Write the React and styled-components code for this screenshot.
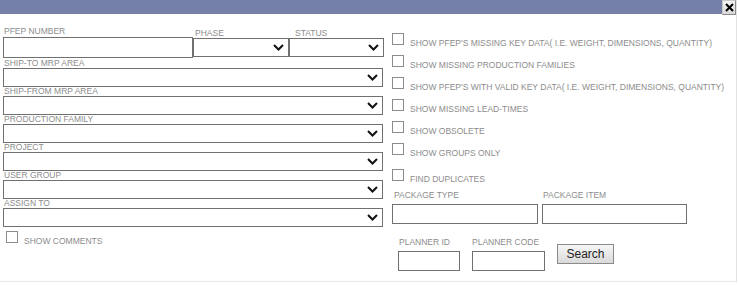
import styled, { createGlobalStyle } from "styled-components";

const GlobalStyle = createGlobalStyle`
    body {
        margin: 0;
        background: #ffffff;
        font-family: "Liberation Sans", Arial, Helvetica, sans-serif;
    }
`;

const leftFields = ['SHIP-TO MRP AREA', 'SHIP-FROM MRP AREA', 'PRODUCTION FAMILY', 'PROJECT', 'USER GROUP', 'ASSIGN TO'];

const options = [
    "SHOW PFEP'S MISSING KEY DATA( I.E. WEIGHT, DIMENSIONS, QUANTITY)",
    'SHOW MISSING PRODUCTION FAMILIES',
    "SHOW PFEP'S WITH VALID KEY DATA( I.E. WEIGHT, DIMENSIONS, QUANTITY)",
    'SHOW MISSING LEAD-TIMES',
    'SHOW OBSOLETE',
    'SHOW GROUPS ONLY',
    'FIND DUPLICATES',
];

function Chevron() {
    return (
        <svg width="11" height="7" viewBox="0 0 11 7">
            <path d="M1 1 L5.5 5.5 L10 1" fill="none" stroke="#111" strokeWidth="2" />
        </svg>
    );
}

function SelectBox({ width, spaced }) {
    return (
        <Select width={width} spaced={spaced}>
            <Chevron />
        </Select>
    );
}

export default function App() {
    return (
        <>
            <GlobalStyle />
            <Dialog>
                <TitleBar>
                    <CloseButton>
                        <svg width="9" height="9" viewBox="0 0 9 9">
                            <path d="M1 1 L8 8 M8 1 L1 8" stroke="#000" strokeWidth="2" />
                        </svg>
                    </CloseButton>
                </TitleBar>

                <Body>
                    <LeftColumn>
                        <TopRow>
                            <Field>
                                <Label>PFEP NUMBER</Label>
                                <TextBox width={190} height={21} />
                            </Field>
                            <Field>
                                <Label indent={2} drop={1}>PHASE</Label>
                                <SelectBox width={96} spaced />
                            </Field>
                            <Field>
                                <Label indent={6} drop={1}>STATUS</Label>
                                <SelectBox width={95} spaced />
                            </Field>
                        </TopRow>

                        {leftFields.map((f) => (
                            <Field key={f}>
                                <Label tight>{f}</Label>
                                <SelectBox width={380} />
                            </Field>
                        ))}

                        <CheckRow left>
                            <Box />
                            <CheckText>SHOW COMMENTS</CheckText>
                        </CheckRow>
                    </LeftColumn>

                    <RightColumn>
                        {options.map((o, i) => (
                            <CheckRow key={o} last={i === options.length - 1}>
                                <Box />
                                <CheckText>{o}</CheckText>
                            </CheckRow>
                        ))}

                        <PackageRow>
                            <Field>
                                <Label indent={2} gap={3}>PACKAGE TYPE</Label>
                                <TextBox width={146} height={20} />
                            </Field>
                            <Field>
                                <Label indent={1} gap={3}>PACKAGE ITEM</Label>
                                <TextBox width={145} height={20} />
                            </Field>
                        </PackageRow>

                        <PlannerRow>
                            <Field>
                                <Label gap={3}>PLANNER ID</Label>
                                <TextBox width={62} height={20} />
                            </Field>
                            <Field>
                                <Label gap={3} indent={0}>PLANNER CODE</Label>
                                <TextBox width={73} height={20} />
                            </Field>
                            <SearchButton>Search</SearchButton>
                        </PlannerRow>
                    </RightColumn>
                </Body>
            </Dialog>
        </>
    );
}

const Dialog = styled.div`
    width: 737px;
    height: 282px;
    box-sizing: border-box;
    border-right: 1px solid #e2e2e2;
    border-bottom: 1px solid #e8e8e8;
    background: #fff;
`;

const TitleBar = styled.div`
    height: 14px;
    background: #7480a7;
    display: flex;
    justify-content: flex-end;
    align-items: flex-start;
`;

const CloseButton = styled.div`
    width: 14px;
    height: 15px;
    box-sizing: border-box;
    background: linear-gradient(#f4f4f4, #d8d8d8);
    border: 1px solid #8a8a8a;
    border-top-color: #c8c8c8;
    border-left-color: #c8c8c8;
    display: flex;
    align-items: center;
    justify-content: center;
    position: relative;
    z-index: 1;
`;

const Body = styled.div`
    display: flex;
    gap: 9px;
    padding: 12px 0 0 3px;
`;

const LeftColumn = styled.div`
    width: 380px;
    display: flex;
    flex-direction: column;
`;

const RightColumn = styled.div`
    display: flex;
    flex-direction: column;
    padding-top: 7px;
`;

const TopRow = styled.div`
    display: flex;
    align-items: flex-end;
    margin-bottom: 1px;
`;

const Field = styled.div`
    display: flex;
    flex-direction: column;
`;

const Label = styled.div`
    font-size: 8.5px;
    line-height: ${({ tight }) => (tight ? '9px' : '11px')};
    color: #8c8c8c;
    padding-left: ${({ indent }) => (indent ?? 1)}px;
    margin-bottom: ${({ gap }) => gap || 0}px;
    position: relative;
    top: ${({ drop }) => drop || 0}px;
    white-space: nowrap;
`;

const TextBox = styled.div`
    width: ${({ width }) => width}px;
    height: ${({ height }) => height}px;
    box-sizing: border-box;
    border: 1px solid #707070;
    background: #fff;
`;

const Select = styled.div`
    width: ${({ width }) => width}px;
    height: 19px;
    box-sizing: border-box;
    border: 1px solid #707070;
    background: #fff;
    display: flex;
    align-items: center;
    justify-content: flex-end;
    padding-right: 4px;
    margin-bottom: ${({ spaced }) => (spaced ? '1px' : '0')};
`;

const CheckRow = styled.div`
    display: flex;
    align-items: flex-end;
    gap: 6px;
    height: 12px;
    margin-bottom: ${({ last }) => (last ? '0' : '10px')};
    margin-top: ${({ last, left }) => (last ? '4px' : left ? '4px' : '0')};
    margin-left: ${({ left }) => (left ? '3px' : '0')};
`;

const Box = styled.div`
    width: 12px;
    height: 12px;
    box-sizing: border-box;
    border: 1px solid #8c8c8c;
    background: #fff;
    flex: none;
`;

const CheckText = styled.span`
    font-size: 8.5px;
    line-height: 10px;
    color: #8c8c8c;
    white-space: nowrap;
    margin-bottom: -3px;
`;

const PackageRow = styled.div`
    display: flex;
    gap: 4px;
    margin-top: 9px;
`;

const PlannerRow = styled.div`
    display: flex;
    gap: 12px;
    padding-left: 6px;
    margin-top: 13px;
    align-items: flex-start;
`;

const SearchButton = styled.div`
    width: 57px;
    height: 20px;
    box-sizing: border-box;
    margin-top: 7px;
    border: 1px solid #8a8a8a;
    background: linear-gradient(#f6f6f6, #dadada);
    font-size: 12px;
    color: #222;
    display: flex;
    align-items: center;
    justify-content: center;
`;
